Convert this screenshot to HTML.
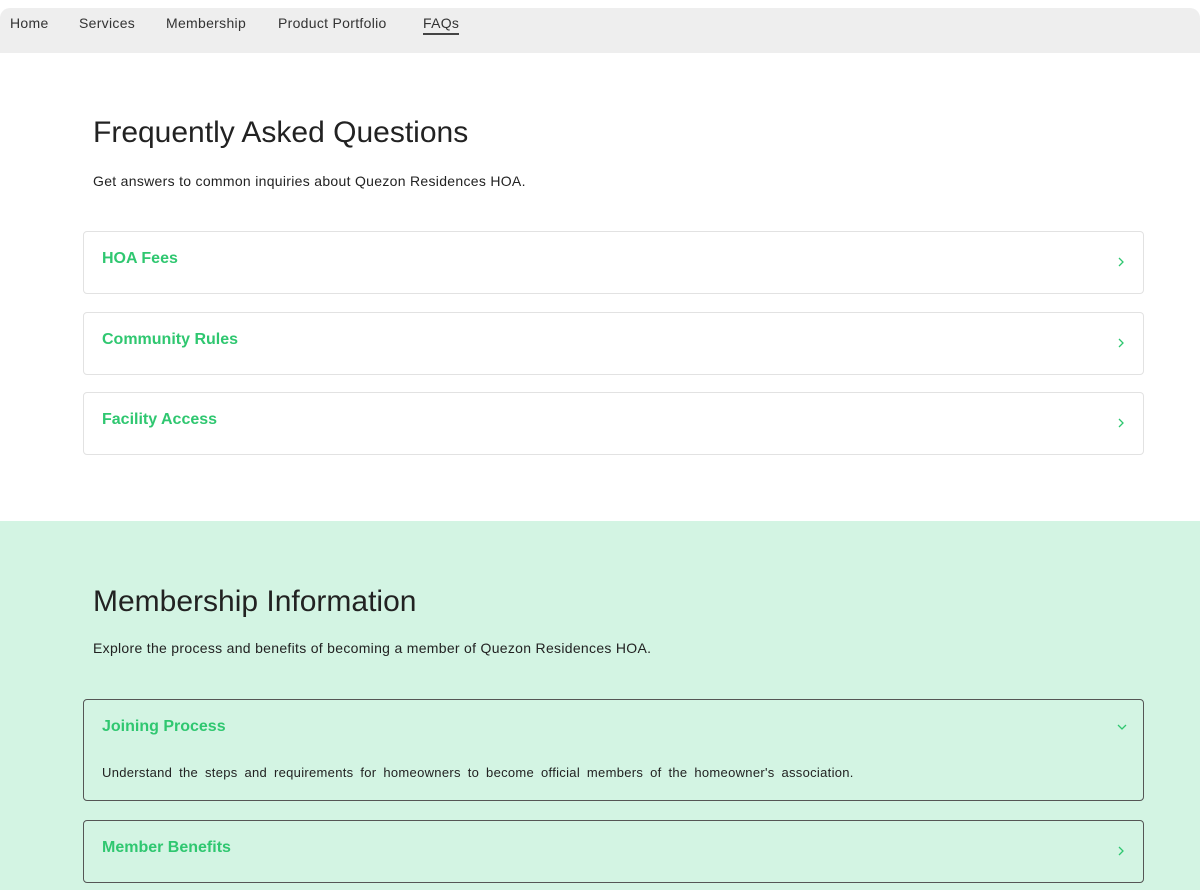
<!DOCTYPE html>
<html><head><meta charset="utf-8"><style>
*{margin:0;padding:0;box-sizing:border-box}
body{width:1200px;height:890px;overflow:hidden;background:#fff;font-family:"Liberation Sans",sans-serif;color:#222}
.nav{position:absolute;top:8px;left:0;width:1200px;height:45px;background:#eeeeee;border-radius:10px 10px 0 0}
.nav span{position:absolute;top:7px;font-size:14px;color:#333;letter-spacing:0.3px}
.h{position:absolute;left:93px;font-size:30px;color:#222}
.p{position:absolute;left:93px;font-size:14px;color:#222;letter-spacing:0.3px}
.card{position:absolute;left:83px;width:1061px;height:63px;border:1px solid #e2e2e2;border-radius:4px;background:#fff}
.card b{position:absolute;left:18px;top:18px;font-size:16px;color:#2fc770}
.chev{position:absolute;right:17px;top:23px;width:10px;height:14px}
.green{position:absolute;top:521px;left:0;width:1200px;height:369px;background:#d3f4e3}
.gcard{position:absolute;left:83px;width:1061px;border:1px solid #555;border-radius:4px;background:#d3f4e3}
.gcard b{position:absolute;left:18px;top:18px;font-size:16px;color:#2fc770}
</style></head><body>
<div class="nav">
<span style="left:10px">Home</span>
<span style="left:79px">Services</span>
<span style="left:166px">Membership</span>
<span style="left:278px">Product Portfolio</span>
<span style="left:423px;border-bottom:2px solid #444;padding-bottom:2px">FAQs</span>
</div>
<div class="h" style="top:116px">Frequently Asked Questions</div>
<div class="p" style="top:173px">Get answers to common inquiries about Quezon Residences HOA.</div>
<div class="card" style="top:231px"><b>HOA Fees</b><svg class="chev" viewBox="0 0 10 14"><path d="M3 3l4 4-4 4" fill="none" stroke="#2fc770" stroke-width="1.3"/></svg></div>
<div class="card" style="top:312px"><b>Community Rules</b><svg class="chev" viewBox="0 0 10 14"><path d="M3 3l4 4-4 4" fill="none" stroke="#2fc770" stroke-width="1.3"/></svg></div>
<div class="card" style="top:392px"><b>Facility Access</b><svg class="chev" viewBox="0 0 10 14"><path d="M3 3l4 4-4 4" fill="none" stroke="#2fc770" stroke-width="1.3"/></svg></div>
<div class="green">
<div class="h" style="top:64px">Membership Information</div>
<div class="p" style="top:119px">Explore the process and benefits of becoming a member of Quezon Residences HOA.</div>
<div class="gcard" style="top:178px;height:102px"><b>Joining Process</b>
<svg style="position:absolute;right:14px;top:22px;width:14px;height:10px" viewBox="0 0 14 10"><path d="M3 3l4 4 4-4" fill="none" stroke="#2fc770" stroke-width="1.3"/></svg>
<div style="position:absolute;left:18px;top:65px;font-size:13px;word-spacing:3px;letter-spacing:0.3px;color:#222">Understand the steps and requirements for homeowners to become official members of the homeowner's association.</div></div>
<div class="gcard" style="top:299px;height:63px"><b>Member Benefits</b><svg class="chev" viewBox="0 0 10 14"><path d="M3 3l4 4-4 4" fill="none" stroke="#2fc770" stroke-width="1.3"/></svg></div>
</div>
</body></html>
